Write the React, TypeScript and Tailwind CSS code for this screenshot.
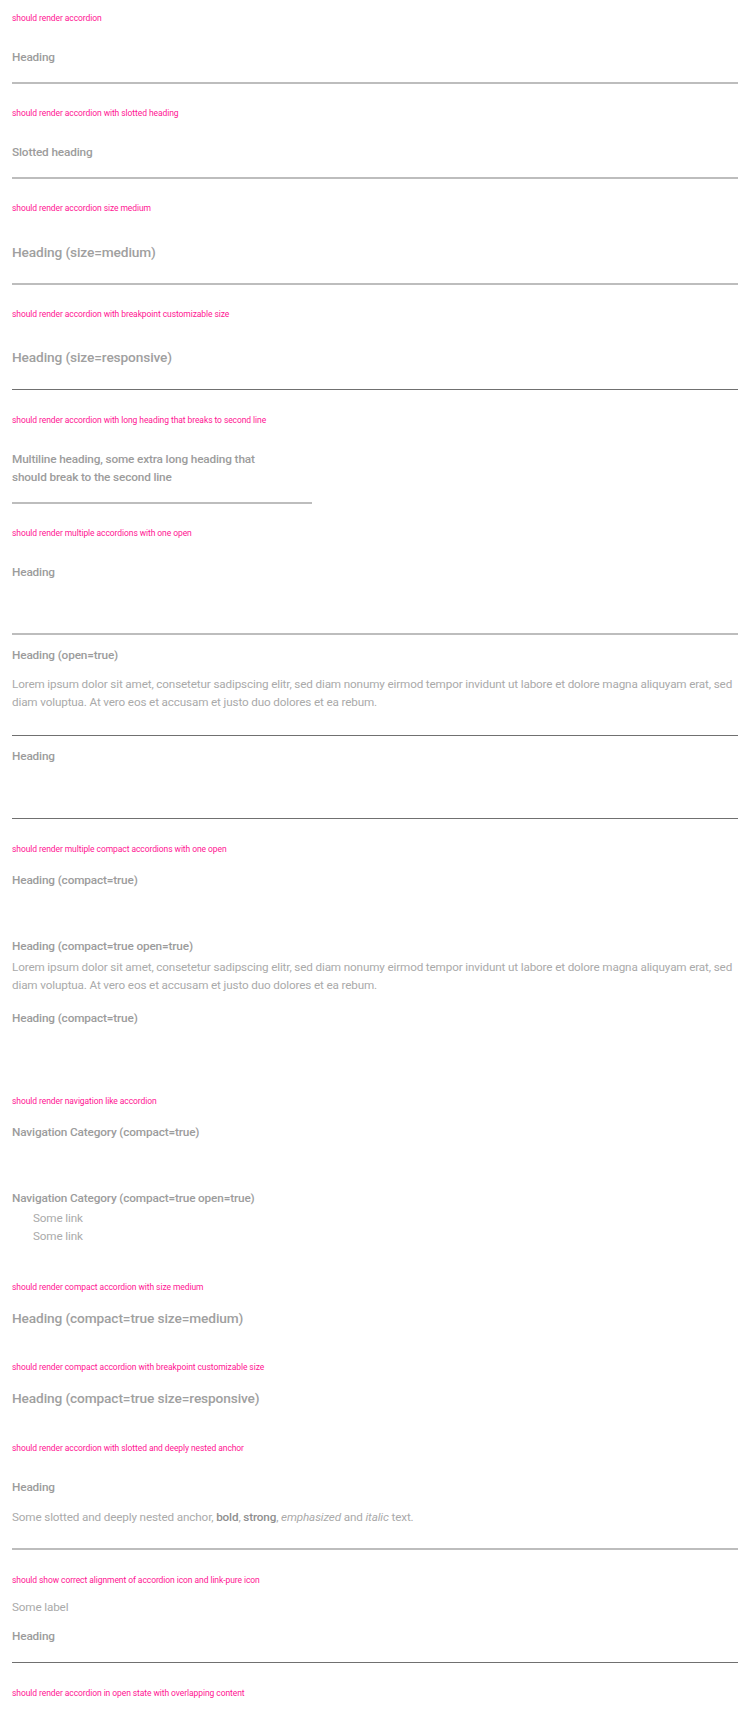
import React from "react";

function Label({ children, className = "" }: { children: React.ReactNode; className?: string }) {
  return (
    <div className={"text-[8.5px] leading-[12px] tracking-[-0.08px] text-[#ff1493] " + className}>{children}</div>
  );
}

function H({ children, className = "" }: { children: React.ReactNode; className?: string }) {
  return (
    <div
      className={
        "text-[11.8px] leading-[18px] font-medium tracking-[-0.15px] text-[#9c9c9c] " + className
      }
    >
      {children}
    </div>
  );
}

function HM({ children, className = "" }: { children: React.ReactNode; className?: string }) {
  return (
    <div
      className={"text-[13.7px] leading-[22px] font-medium tracking-[-0.12px] text-[#a0a0a0] " + className}
    >
      {children}
    </div>
  );
}

function P({ children, className = "" }: { children: React.ReactNode; className?: string }) {
  return (
    <div className={"text-[11.7px] leading-[18px] tracking-[-0.14px] text-[#aaaaaa] " + className}>
      {children}
    </div>
  );
}

function LineL({ className = "" }: { className?: string }) {
  return <div className={"h-[2px] bg-[#bdbdbd] " + className} />;
}

function LineD({ className = "" }: { className?: string }) {
  return <div className={"h-px bg-[#707070] " + className} />;
}

function Lorem({ className = "" }: { className?: string }) {
  return (
    <P className={className}>
      <span className="whitespace-nowrap">
        Lorem ipsum dolor sit amet, consetetur sadipscing elitr, sed diam nonumy eirmod tempor invidunt ut labore et
        dolore magna aliquyam erat, sed
      </span>
      <br />
      diam voluptua. At vero eos et accusam et justo duo dolores et ea rebum.
    </P>
  );
}

export default function App() {
  return (
    <div className="min-h-[1716px] bg-white px-[12px] pt-[12px] font-['Roboto','Liberation_Sans',sans-serif]">
      <Label>should render accordion</Label>
      <H className="mt-[24px]">Heading</H>
      <LineL className="mt-[16px]" />

      <Label className="mt-[23px]">should render accordion with slotted heading</Label>
      <H className="mt-[24px]">Slotted heading</H>
      <LineL className="mt-[16px]" />

      <Label className="mt-[23px]">should render accordion size medium</Label>
      <HM className="mt-[27px]">Heading (size=medium)</HM>
      <LineL className="mt-[20px]" />

      <Label className="mt-[23px]">should render accordion with breakpoint customizable size</Label>
      <HM className="mt-[26px]">Heading (size=responsive)</HM>
      <LineD className="mt-[21px]" />

      <Label className="mt-[24px]">should render accordion with long heading that breaks to second line</Label>
      <H className="mt-[24px]">
        <span className="block whitespace-nowrap">Multiline heading, some extra long heading that</span>
        <span className="block whitespace-nowrap">should break to the second line</span>
      </H>
      <LineL className="mt-[16px] w-[300px]" />

      <Label className="mt-[23px]">should render multiple accordions with one open</Label>
      <H className="mt-[24px]">Heading</H>
      <LineL className="mt-[52px]" />
      <H className="mt-[11px]">Heading (open=true)</H>
      <Lorem className="mt-[11px]" />
      <LineD className="mt-[24px]" />
      <H className="mt-[11px]">Heading</H>
      <LineD className="mt-[53px]" />

      <Label className="mt-[24px]">should render multiple compact accordions with one open</Label>
      <H className="mt-[16px]">Heading (compact=true)</H>
      <H className="mt-[48px]">Heading (compact=true open=true)</H>
      <Lorem className="mt-[3px]" />
      <H className="mt-[15px]">Heading (compact=true)</H>

      <Label className="mt-[68px]">should render navigation like accordion</Label>
      <H className="mt-[16px]">Navigation Category (compact=true)</H>
      <H className="mt-[48px]">Navigation Category (compact=true open=true)</H>
      <div className="mt-[2px] pl-[21px]">
        <P>Some link</P>
        <P>Some link</P>
      </div>

      <Label className="mt-[36px]">should render compact accordion with size medium</Label>
      <HM className="mt-[14px]">Heading (compact=true size=medium)</HM>

      <Label className="mt-[32px]">should render compact accordion with breakpoint customizable size</Label>
      <HM className="mt-[14px]">Heading (compact=true size=responsive)</HM>

      <Label className="mt-[33px]">should render accordion with slotted and deeply nested anchor</Label>
      <H className="mt-[24px]">Heading</H>
      <P className="mt-[12px]">
        Some slotted and deeply nested anchor, <b className="font-medium text-[#8f8f8f]">bold</b>,{" "}
        <strong className="font-medium text-[#8f8f8f]">strong</strong>, <em className="italic">emphasized</em> and{" "}
        <i className="italic">italic</i> text.
      </P>
      <LineL className="mt-[22px]" />

      <Label className="mt-[24px]">should show correct alignment of accordion icon and link-pure icon</Label>
      <P className="mt-[12px]">Some label</P>
      <H className="mt-[11px]">Heading</H>
      <LineD className="mt-[17px]" />

      <Label className="mt-[24px]">should render accordion in open state with overlapping content</Label>
    </div>
  );
}
